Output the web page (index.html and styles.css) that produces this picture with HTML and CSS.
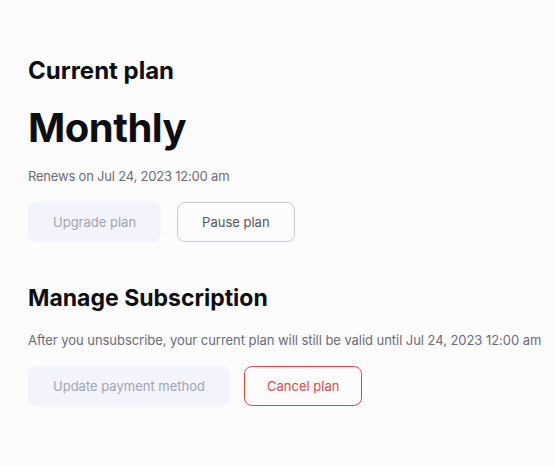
FILE: index.html
```html
<!DOCTYPE html>
<html lang="en">
<head>
    <meta charset="UTF-8">
    <meta name="viewport" content="width=device-width, initial-scale=1.0">
    <title>Subscription</title>
    <link rel="stylesheet" href="styles.css">
</head>
<body>
    <div class="container">
        <section class="plan">
            <h2>Current plan</h2>
            <h1>Monthly</h1>
            <p class="note">Renews on Jul 24, 2023 12:00 am</p>
            <div class="actions">
                <button class="btn btn-soft" disabled>Upgrade plan</button>
                <button class="btn btn-outline">Pause plan</button>
            </div>
        </section>

        <section class="manage">
            <h2>Manage Subscription</h2>
            <p class="note">After you unsubscribe, your current plan will still be valid until Jul 24, 2023 12:00 am</p>
            <div class="actions">
                <button class="btn btn-soft" disabled>Update payment method</button>
                <button class="btn btn-danger">Cancel plan</button>
            </div>
        </section>
    </div>
</body>
</html>
```

FILE: styles.css
```css
body {
    margin: 0;
    font-family: Inter, "Noto Sans", sans-serif;
    background-color: #fcfcfd;
    color: #0d0d14;
}

.container {
    padding: 56px 28px 0;
}

h2 {
    margin: 0;
    font-size: 24px;
    font-weight: 700;
}

h1 {
    margin: 18px 0 0;
    font-size: 40px;
    font-weight: 700;
    letter-spacing: -0.5px;
}

.note {
    margin: 14px 0 0;
    font-size: 13px;
    letter-spacing: -0.05px;
    color: #6b6b78;
    white-space: nowrap;
}

.plan .note {
    margin-top: 16px;
    letter-spacing: -0.2px;
}

.actions {
    display: flex;
    gap: 14px;
    margin-top: 18px;
}

.plan .actions {
    gap: 16px;
}

.btn {
    height: 40px;
    padding: 0 24px;
    border-radius: 8px;
    font-family: inherit;
    font-size: 13px;
    background-color: transparent;
    border: 1px solid transparent;
    cursor: pointer;
}

.btn-soft {
    background-color: #f3f3fb;
    color: #a3a3b3;
    cursor: default;
}

.btn-outline {
    border-color: #c9c9d2;
    color: #55555f;
}

.btn-danger {
    padding: 0 22px;
    border-color: #de4b45;
    color: #de4b45;
}

.manage {
    margin-top: 42px;
}

.manage h2 {
    font-size: 23px;
}

.manage .note {
    margin-top: 20px;
}

.manage .actions {
    margin-top: 18px;
}
```
